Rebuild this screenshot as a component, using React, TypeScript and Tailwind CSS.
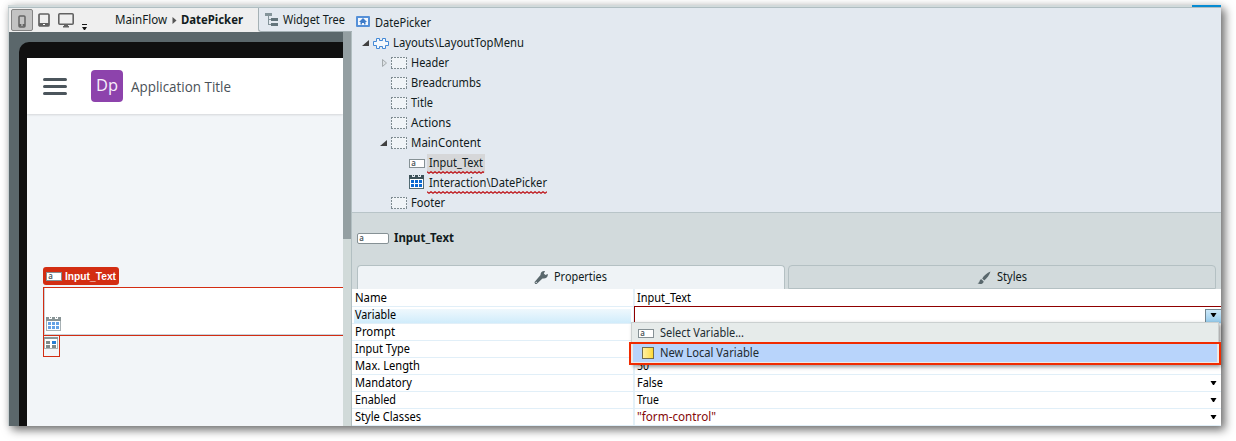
import type { ReactNode } from "react";

const InputGlyph = ({ w = 16, h = 9, className = "" }: { w?: number; h?: number; className?: string }) => (
  <svg width={w} height={h} className={`shrink-0 overflow-visible ${className}`}>
    <rect x="0.5" y="0.5" width={w - 1} height={h - 1} rx={w > 20 ? 1.5 : 0} fill="#fff" stroke="#869195" />
    <text x="2.3" y={h / 2 + 2.3} fontSize="8" fontWeight="500" fontFamily="Noto Sans, sans-serif" fill="#3a484d">a</text>
  </svg>
);

const Placeholder = () => (
  <svg width="16" height="12" className="shrink-0">
    <rect width="16" height="12" fill="#f0f4f7" />
    <path d="M0 .5h16M0 11.5h16" stroke="#7f8c92" strokeDasharray="2 1" />
    <path d="M.5 0v12M15.5 0v12" stroke="#7f8c92" strokeDasharray="2 1" />
  </svg>
);

const Calendar = ({ faded = false }: { faded?: boolean }) => (
  <svg width="15" height="14" className="shrink-0" shapeRendering="crispEdges">
    <rect x="0.5" y="0.5" width="14" height="13" fill="#fff" stroke={faded ? "#a7b1b4" : "#526b74"} />
    <rect width="15" height="4" fill={faded ? "#879395" : "#3d5158"} />
    <path d="M3 0h3v2H3zM9 0h3v2H9z" fill={faded ? "#fff" : "#e3e9f0"} />
    <path d="M4 0h1v1H4zM10 0h1v1h-1z" fill={faded ? "#879395" : "#3d5158"} />
    <path d="M2 5h3v3H2zM6 5h3v3H6zM10 5h3v3h-3zM2 9h3v3H2zM6 9h3v3H6zM10 9h3v3h-3z" fill={faded ? "#65a2e5" : "#0b69d1"} />
  </svg>
);

const Open = () => (
  <svg width="7" height="6" className="-mt-px shrink-0"><path d="M7 0v6H0z" fill="#404040" /></svg>
);

const Squiggle = ({ w }: { w: number }) => (
  <svg width={w} height="3" className="absolute left-0 -bottom-px">
    <path
      d={"M0 .7" + Array.from({ length: Math.ceil(w / 2) }, (_, i) => `L${i * 2 + 2} ${i % 2 ? 0.7 : 2.3}`).join("")}
      fill="none" stroke="#be161b" strokeWidth="1.15"
    />
  </svg>
);

const Label = ({ w, children, bold = false, color = "#111b20", className = "" }: { w: number; children: string; bold?: boolean; color?: string; className?: string }) => (
  <svg width={w} height="18" className={`shrink-0 overflow-visible ${className}`}>
    <text x="0" y="13" textLength={w} lengthAdjust="spacingAndGlyphs" fontSize="12" fontWeight={bold ? 700 : 400} fontFamily="Noto Sans, sans-serif" fill={color}>{children}</text>
  </svg>
);

const TreeRow = ({ children, className = "" }: { children: ReactNode; className?: string }) => (
  <div className={`flex h-5 shrink-0 items-center ${className}`}>{children}</div>
);

const Arrow = () => (
  <svg width="7" height="4" className="shrink-0"><path d="M.5 0h6L4 4H3z" fill="#000" /></svg>
);

const rows = [
  { name: "Name", w: 32, value: "Input_Text", vw: 54 },
  { name: "Variable", w: 41, value: "", vw: 0 },
  { name: "Prompt", w: 40, value: "", vw: 0 },
  { name: "Input Type", w: 55, value: "", vw: 0 },
  { name: "Max. Length", w: 65, value: "50", vw: 12 },
  { name: "Mandatory", w: 57, value: "False", vw: 26, arrow: true },
  { name: "Enabled", w: 41, value: "True", vw: 22, arrow: true },
  { name: "Style Classes", w: 66, value: "\"form-control\"", vw: 79, arrow: true, red: true },
];

const Toolbar = () => (
  <div className="flex h-6 bg-[#efefef]">
    <div className="flex w-[249px] items-center">
      <div className="ml-[2px] flex h-[22px] w-[22px] items-center justify-center rounded-[2px] border border-[#838383] bg-[#c3c3c3]">
        <svg width="8" height="13" className="mt-[2px]"><rect x="1" y="1" width="6" height="11" rx="1" fill="none" stroke="#656565" strokeWidth="1.5" /><path d="M1 9h6v2.5H1z" fill="#656565" /><path d="M3 10h2" stroke="#ddd" /></svg>
      </div>
      <svg width="12" height="14" className="ml-[5px]"><rect x="1" y="1" width="10" height="12" rx="1" fill="none" stroke="#626262" strokeWidth="1.7" /><path d="M1 10h10v3H1z" fill="#626262" /><path d="M5 11.5h2" stroke="#fff" /></svg>
      <svg width="16" height="15" className="ml-2"><rect x=".8" y=".8" width="14.4" height="10.4" rx="1" fill="none" stroke="#626262" strokeWidth="1.6" /><path d="M6 12h4v1h1v1.5H5V13h1z" fill="#626262" /></svg>
      <svg width="5" height="6" className="ml-2 mt-[13px]"><path d="M0 0h5v1H0zM0 3h5L3 6H2z" fill="#151515" /></svg>
      <div className="ml-[28px] flex items-center">
        <Label w={52}>MainFlow</Label>
        <svg width="5" height="7" className="ml-[5px] mr-1 mt-px"><path d="M.5 0 4.5 3.5.5 7z" fill="#555" /></svg>
        <Label w={62} bold>DatePicker</Label>
      </div>
    </div>
    <div className="flex flex-1 items-center rounded-bl-[3px] border-b border-l border-[#a5b1b5] bg-[#e3e9f0] pl-[6px]">
      <svg width="13" height="13" shapeRendering="crispEdges"><path d="M0 0h7v3H0z" fill="#84949a" /><path d="M3.5 3v8.5h3M3.5 6.5h3" fill="none" stroke="#84949a" /><path d="M6 5h7v3H6zM6 10h7v3H6z" fill="#63747b" /></svg>
      <div className="ml-[5px] flex"><Label w={62}>Widget Tree</Label></div>
    </div>
  </div>
);

const Canvas = () => (
  <div className="flex h-[394px] bg-[#5b676b]">
    <div className="mt-[10px] ml-[10px] flex w-[324px] flex-col rounded-tl-[10px] bg-[#101010] pt-4 pl-2">
      <div className="flex flex-1 flex-col bg-[#f2f5f8]">
        <div className="flex h-14 shrink-0 items-center bg-white pl-4 shadow-[0_1px_2px_rgba(0,0,0,0.12)]">
          <div className="flex flex-col gap-[4px]">
            <div className="h-[3px] w-6 rounded-sm bg-[#4b555c]" />
            <div className="h-[3px] w-6 rounded-sm bg-[#4b555c]" />
            <div className="h-[3px] w-6 rounded-sm bg-[#4b555c]" />
          </div>
          <div className="ml-6 flex h-8 w-8 items-center justify-center rounded-[4px] bg-[#8d43ac]">
            <svg width="22" height="24" className="overflow-visible"><text x="0" y="17" textLength="22" lengthAdjust="spacingAndGlyphs" fontSize="17" fontFamily="Open Sans, sans-serif" fill="#f7effb">Dp</text></svg>
          </div>
          <svg width="100" height="20" className="ml-2 overflow-visible"><text x="0" y="15.5" textLength="100" lengthAdjust="spacingAndGlyphs" fontSize="14" fontFamily="Open Sans, sans-serif" fill="#4a5157">Application Title</text></svg>
        </div>
        <div className="mt-[153px] ml-4 flex h-[18px] w-[76px] shrink-0 items-center rounded-[3px] bg-[#d32d12] pl-[3px]">
          <InputGlyph />
          <svg width="51" height="16" className="ml-[3px] overflow-visible"><text x="0" y="12" textLength="51" lengthAdjust="spacingAndGlyphs" fontSize="11.5" fontWeight="700" fontFamily="Liberation Sans, sans-serif" fill="#fff">Input_Text</text></svg>
        </div>
        <div className="mt-[2px] ml-4 flex h-[49px] shrink-0 items-end border-y border-l border-[#d32d12] bg-white pb-[4px] pl-[2px] shadow-[inset_1px_-1px_0_#c9d1da]">
          <Calendar faded />
        </div>
        <div className="ml-4 h-[21px] w-[17px] shrink-0 border-x border-b border-[#d32d12]">
          <svg width="15" height="14" shapeRendering="crispEdges"><path d="M.5 2.5h13v10H.5z" fill="#fff" stroke="#aab3b5" /><path d="M0 1h14v2H0z" fill="#88979a" /><path d="M2 5h4v3H2zM2 9h4v3H2zM8 9h4v3H8z" fill="#7d8989" /><path d="M8 5h4v3H8z" fill="#277ed5" /></svg>
        </div>
      </div>
    </div>
    <div className="w-2 bg-[#d1dad9]"><div className="h-[207px] bg-[#949fa2]" /></div>
    <div className="w-px bg-[#b2bfc2]" />
  </div>
);

const Tree = () => (
  <div className="flex h-[205px] shrink-0 flex-col border-b border-[#b8c4c8] bg-[#e3e9f0] pt-[4px]">
    <TreeRow className="pl-1">
      <svg width="14" height="11" className="-mt-px"><rect width="14" height="11" rx="1" fill="#5590d8" /><rect x="2" y="2" width="10" height="7" fill="#f4f8fd" /><path d="M7 2 3 6h1.5v2.5H6V7h2v1.5h1.5V6H11z" fill="#3f7cc9" /></svg>
      <div className="mt-px ml-[5px] flex"><Label w={56}>DatePicker</Label></div>
    </TreeRow>
    <TreeRow className="mt-px pl-[10px]">
      <Open />
      <svg width="16" height="13" className="mr-1 ml-1"><path d="M3.5 4.5V1.5h3v2h3v-2h3v3h3v4h-3v3h-3v-2h-3v2h-3v-3h-3v-4z" fill="#f4f8fc" stroke="#4389d6" strokeLinejoin="round" /></svg>
      <Label w={131}>Layouts\LayoutTopMenu</Label>
    </TreeRow>
    <TreeRow className="pl-[30px]">
      <svg width="5" height="8" className="mr-1"><path d="M.5 .5 4.5 4 .5 7.5z" fill="#dce1e5" stroke="#a4aaad" /></svg>
      <Placeholder /><div className="ml-1 flex"><Label w={38}>Header</Label></div>
    </TreeRow>
    <TreeRow className="gap-1 pl-[39px]"><Placeholder /><Label w={70}>Breadcrumbs</Label></TreeRow>
    <TreeRow className="gap-1 pl-[39px]"><Placeholder /><Label w={22}>Title</Label></TreeRow>
    <TreeRow className="gap-1 pl-[39px]"><Placeholder /><Label w={40}>Actions</Label></TreeRow>
    <TreeRow className="gap-1 pl-[28px]"><Open /><Placeholder /><Label w={70}>MainContent</Label></TreeRow>
    <TreeRow className="pl-[57px]">
      <InputGlyph />
      <div className="relative ml-[2px] flex h-[19px] bg-[#d6d7d9] px-[2px]"><Label w={54}>Input_Text</Label><Squiggle w={57} /></div>
    </TreeRow>
    <TreeRow className="pl-[57px]">
      <div className="-mt-[2px] flex"><Calendar /></div>
      <div className="relative ml-[3px] flex h-[19px] px-[2px]"><Label w={118}>Interaction\DatePicker</Label><Squiggle w={120} /></div>
    </TreeRow>
    <TreeRow className="gap-1 pl-[39px]"><Placeholder /><Label w={34}>Footer</Label></TreeRow>
  </div>
);

const Properties = () => (
  <div className="relative flex h-[137px] shrink-0 flex-col bg-white">
    {rows.map((row, i) => (
      <div key={row.name} className={`flex shrink-0 border-b border-[#e1eff8] ${i === 0 ? "h-[18px]" : "h-[17px]"}`}>
        <div className={`flex w-[281px] items-center ${i === 1 ? "border-2 border-b-0 border-white bg-linear-to-b from-[#eff8fd] to-[#d0ecfb]" : ""}`}>
          <div className={`flex ${i === 1 ? "-mt-[2px] ml-px" : "ml-[3px]"}`}><Label w={row.w} color="#000">{row.name}</Label></div>
        </div>
        <div className={`flex flex-1 items-center border-l-2 border-[#e4f1f8] ${row.value ? "pl-[2px]" : ""}`}>
          {row.value && <Label w={row.vw} color={row.red ? "#850808" : "#000"}>{row.value}</Label>}
          {row.arrow && <div className="mr-[4px] ml-auto"><Arrow /></div>}
          {i === 1 && (
            <div className="-mt-px -ml-px flex h-[17px] w-[calc(100%+1px)] items-end justify-end border-t border-l border-[#8f0000] bg-white">
              <div className="flex h-[14px] w-4 items-center justify-center border-t border-l border-[#71848e] bg-linear-to-b from-[#cde8f8] to-[#91c9eb] pb-[3px]"><Arrow /></div>
            </div>
          )}
        </div>
      </div>
    ))}
    <div className="absolute top-[33px] left-[279px] flex h-[43px] w-[588px] flex-col border border-[#cbd0d0] bg-[#e6ebea] shadow-[2px_2px_4px_rgba(0,0,0,0.4)]">
      <div className="flex h-[19px] items-center pl-[6px]"><InputGlyph className="mt-[2px]" /><div className="ml-[6px] flex"><Label w={84} color="#222b30">Select Variable...</Label></div></div>
    </div>
    <div className="absolute top-[53px] left-[277px] flex h-[23px] w-[592px] border-2 border-[#f12b00] bg-[#eee9e5] pr-[2px] pb-px pl-[2px]">
      <div className="flex flex-1 items-center bg-[#b8d4fb] pl-[9px]">
        <div className="h-3 w-3 border border-[#736c4b] bg-linear-to-r from-[#fff0a0] to-[#ffda2d]" />
        <div className="ml-[6px] flex"><Label w={99} color="#222b30">New Local Variable</Label></div>
      </div>
    </div>
  </div>
);

export default function App() {
  return (
    <div className="h-[441px] w-[1236px] overflow-hidden bg-white pt-[5px] pl-2">
      <div className="flex h-[421px] w-[1213px] flex-col shadow-[4px_4px_9px_0px_rgba(0,0,0,0.55),0_0_8px_rgba(0,0,0,0.1)]">
        <div className="flex h-[3px] shrink-0 border-b border-[#b0bec2] bg-[#d2dadb]"><div className="ml-auto h-[2px] w-[29px] bg-[#078bd2]" /></div>
        <div className="flex h-[418px]">
          <div className="w-[344px] shrink-0 border-l border-[#c5ced0]"><Toolbar /><Canvas /></div>
          <div className="flex w-[869px] flex-col">
            <Tree />
            <div className="flex h-[76px] shrink-0 flex-col bg-[#d2dadc]">
              <div className="flex h-[52px] items-center pl-[5px]">
                <InputGlyph w={32} h={11} className="-mt-px" /><div className="-mt-[2px] ml-[5px] flex"><Label w={60} bold>Input_Text</Label></div>
              </div>
              <div className="flex h-6 gap-[3px] pl-[5px] pr-[5px]">
                <div className="flex w-[428px] items-center justify-center rounded-t-[4px] border-x border-t border-[#b4c0c3] bg-[#eff3f6] pr-px">
                  <svg width="15" height="15" viewBox="0 0 15 15" className="mr-[5px]"><path d="M13.8 4.1 11.4 5 9.8 3.5 11 1.2C8.5.7 6.3 2.5 6.5 5.1L.8 11.7C-.1 12.8 1.7 14.7 2.9 13.8L8.5 8.4c3 .7 5.8-1.1 5.3-4.3z" fill="#59676c" /><circle cx="2.2" cy="12.4" r=".6" fill="#eff3f6" /></svg>
                  <Label w={53} className="-mt-px">Properties</Label>
                </div>
                <div className="flex flex-1 items-center justify-center rounded-t-[4px] border border-[#b4c0c3]">
                  <svg width="14" height="14" viewBox="0 0 14 14" className="mt-[2px] mr-[6px]"><path d="M13.5.5C10 2 7 4.5 5.2 7.5l2.1 2.1C10 7 12.5 4 13.5.5zM4.5 8.3C2.9 8.3 2.7 10 2.3 11c-.4.9-1.1 1-1.9 1 1.8 1.7 5.6 1.5 6.3-1.5z" fill="#59676c" /></svg>
                  <Label w={30}>Styles</Label>
                </div>
              </div>
            </div>
            <Properties />
          </div>
        </div>
      </div>
    </div>
  );
}
